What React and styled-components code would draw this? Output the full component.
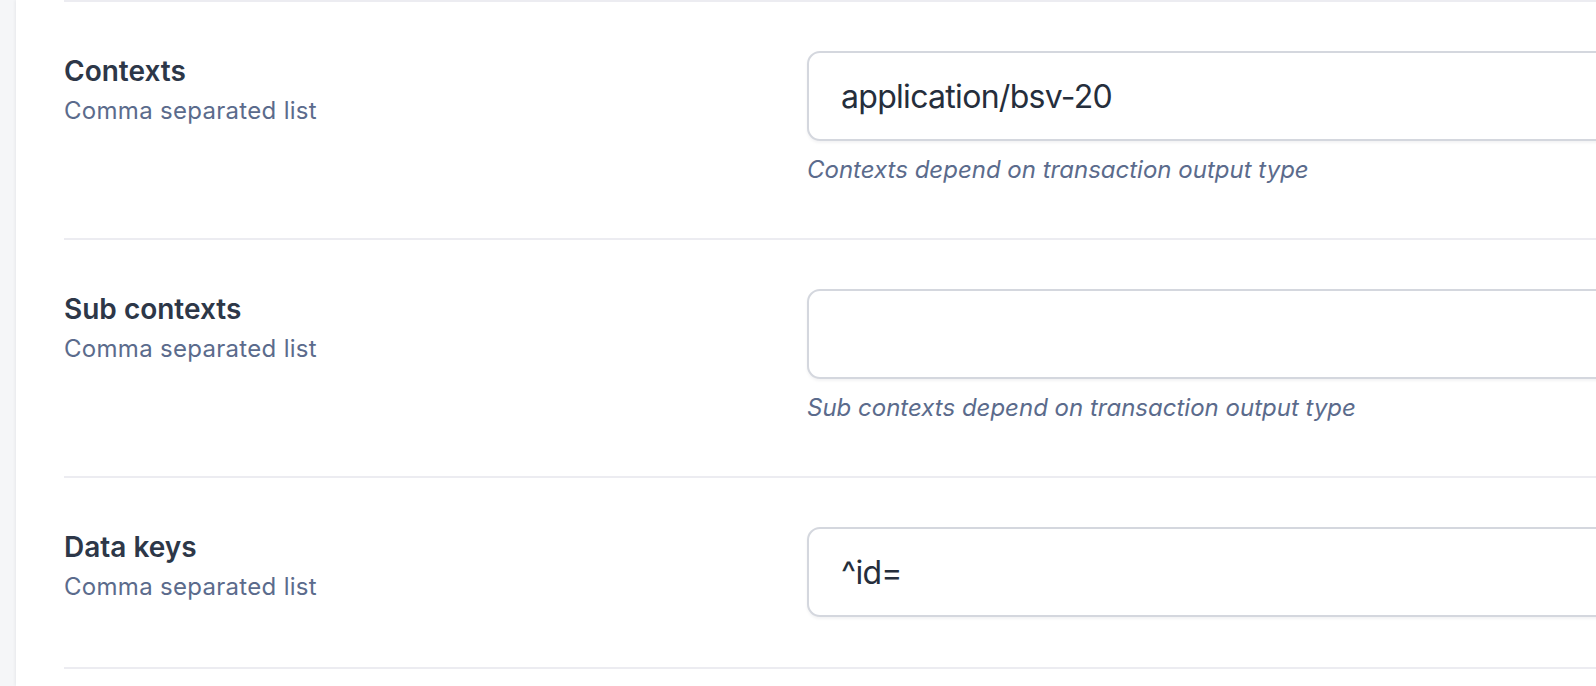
import React from 'react';
import styled, { createGlobalStyle } from 'styled-components';

const GlobalStyle = createGlobalStyle`
    html, body {
        margin: 0;
        padding: 0;
        overflow: hidden;
        background: #f5f6f8;
        font-family: Inter, "Noto Sans", "Liberation Sans", sans-serif;
    }
`;

const fields = [
    { label: 'Contexts', hint: 'Comma separated list', value: 'application/bsv-20', help: 'Contexts depend on transaction output type' },
    { label: 'Sub contexts', hint: 'Comma separated list', value: '', help: 'Sub contexts depend on transaction output type' },
    { label: 'Data keys', hint: 'Comma separated list', value: '^id=' },
];

const App = () => {
    return (
        <>
            <GlobalStyle />
            <Page>
                <Panel>
                    <Form>
                        {fields.map((f) => (
                            <Row key={f.label}>
                                <LabelCol>
                                    <Label>{f.label}</Label>
                                    <Hint>{f.hint}</Hint>
                                </LabelCol>
                                <FieldCol>
                                    <Input type="text" defaultValue={f.value} />
                                    {f.help && <Help>{f.help}</Help>}
                                </FieldCol>
                            </Row>
                        ))}
                    </Form>
                </Panel>
            </Page>
        </>
    );
};

export default App;

const Page = styled.div`
    display: flex;
    height: 686px;
    padding-left: 16px;
`;

const Panel = styled.main`
    flex: 1;
    background: #ffffff;
    box-shadow: -1px 0 3px rgba(15, 23, 42, 0.06);
    padding-left: 48px;
    overflow: hidden;
`;

const Form = styled.div`
    width: 2200px;
`;

const Row = styled.div`
    display: grid;
    grid-template-columns: 743px 1fr;
    border-top: 2px solid #ececf1;
    padding: 49px 0 50px;

    &:last-child {
        border-bottom: 2px solid #ececf1;
    }
`;

const LabelCol = styled.div`
    display: flex;
    flex-direction: column;
`;

const Label = styled.div`
    font-size: 28px;
    line-height: 40px;
    font-weight: 600;
    color: #2d3748;
`;

const Hint = styled.div`
    margin-top: 4px;
    font-size: 24px;
    line-height: 32px;
    letter-spacing: 0.3px;
    color: #5b6b8c;
`;

const FieldCol = styled.div`
    display: flex;
    flex-direction: column;
`;

const Input = styled.input`
    box-sizing: border-box;
    height: 90px;
    width: 100%;
    padding: 0 32px;
    border: 2px solid #d4d7de;
    border-radius: 13px;
    background: #ffffff;
    box-shadow: 0 2px 3px rgba(15, 23, 42, 0.05);
    font-family: Inter, "Noto Sans", "Liberation Sans", sans-serif;
    font-size: 32px;
    letter-spacing: -0.7px;
    color: #252e3c;
    outline: none;
`;

const Help = styled.p`
    margin: 11px 0 0;
    font-size: 24px;
    line-height: 36px;
    font-style: italic;
    color: #5b6b8c;
`;
